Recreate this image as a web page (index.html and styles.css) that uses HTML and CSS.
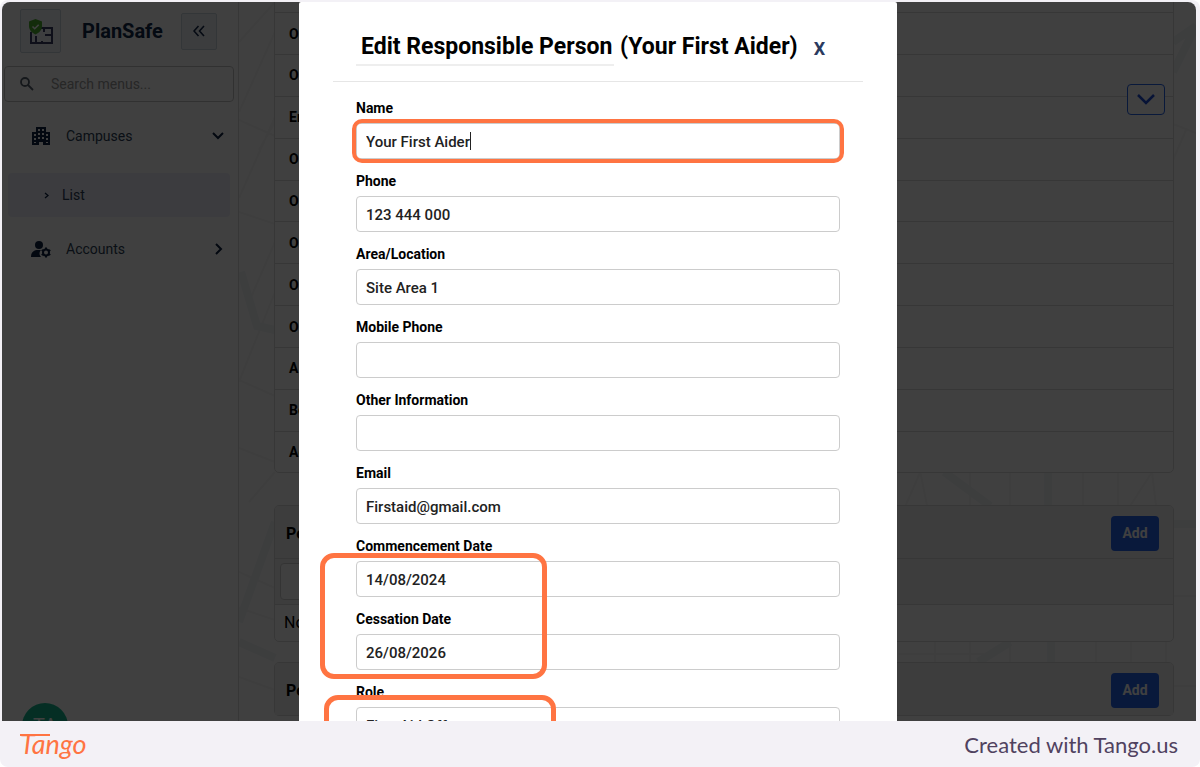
FILE: index.html
```html
<!DOCTYPE html>
<html lang="en">
  <head>
    <meta charset="utf-8">
    <title>PlanSafe</title>
    <link rel="stylesheet" href="styles.css">
  </head>
  <body>
    <div class="page">
      <div class="frame">
        <div class="app">
          <!-- Sidebar -->
          <aside class="sidebar">
            <div class="brand">
              <div class="logo">
                <svg width="26" height="28" viewBox="0 0 26 28" fill="none">
                  <path d="M3 15v11h21V11H13M8 26v-6h-1M16 11v4M24 18h-7M14 26v-2" stroke="#3b3f66" stroke-width="2"/>
                  <path d="M7.500 2l6.500 2.500v4.500c0 4-3 7-6.500 8.500c-3.500-1.500-6.500-4.500-6.500-8.500V4.500z" fill="#4caf2f"/>
                  <path d="M4.500 9.500l2.200 2.200l4-4" stroke="#fff" stroke-width="1.600"/>
                </svg>
              </div>
              <span class="brand-name">PlanSafe</span>
              <button class="collapse" aria-label="Collapse menu">
                <svg width="12" height="12" viewBox="0 0 12 12" fill="none" stroke="#14294a" stroke-width="1.6"><path d="M5.500 1L1 6l4.500 5M11 1L6.500 6l4.500 5"/></svg>
              </button>
            </div>
            <div class="search">
              <svg width="14" height="14" viewBox="0 0 14 14" fill="none" stroke="#55606e" stroke-width="1.8"><circle cx="5" cy="5" r="4"/><path d="M8 8l5 5"/></svg>
              <input type="text" aria-label="Search menus" placeholder="Search menus...">
            </div>
            <nav>
              <a class="menu-item" href="#campuses">
                <svg width="20" height="20" viewBox="0 0 20 20"><path fill="#0d2040" fill-rule="evenodd" d="M5 1h10v5h4v13h-7v-3H8v3H1V6h4zM7 3v2h2V3zM11 3v2h2V3zM7 7v2h2V7zM11 7v2h2V7zM3 8v2h2V8zM15 8v2h2V8zM3 12v2h2v-2zM7 11v2h2v-2zM11 11v2h2v-2zM15 12v2h2v-2zM3 16v1h2v-1zM15 16v1h2v-1z"/></svg>
                <span>Campuses</span>
                <svg class="arrow" width="12" height="12" viewBox="0 0 12 12" fill="none" stroke="#0d2040" stroke-width="2"><path d="M1 3l5 5l5-5"/></svg>
              </a>
              <a class="submenu-item" href="#list">
                <svg width="5" height="7" viewBox="0 0 5 7" fill="none" stroke="#0d2040" stroke-width="1.3"><path d="M1 1l3 2.500l-3 2.500"/></svg>
                <span>List</span>
              </a>
              <a class="menu-item" href="#accounts">
                <svg width="20" height="18" viewBox="0 0 20 18"><circle cx="8" cy="5" r="4" fill="#0d2040"/><path fill="#0d2040" d="M0 17c0-5 3-7 7-7h3c-2 2-2 5 0 7z"/><circle cx="15" cy="12.500" r="3" fill="none" stroke="#0d2040" stroke-width="2"/><path d="M15 7.500v2M15 15.500v2M10.700 10l1.700 1M17.600 14l1.700 1M10.700 15l1.700-1M17.600 11l1.700-1" stroke="#0d2040" stroke-width="2"/></svg>
                <span>Accounts</span>
                <svg class="arrow" width="12" height="12" viewBox="0 0 12 12" fill="none" stroke="#0d2040" stroke-width="2"><path d="M4 1l5 5l-5 5"/></svg>
              </a>
            </nav>
            <div class="avatar">TA</div>
          </aside>

          <!-- Campus details -->
          <main class="content">
            <svg class="map" viewBox="0 0 958 719" preserveAspectRatio="none" fill="none">
              <g stroke="#f6f6f6" stroke-width="2">
                <path d="M0 40L36 0M0 110L36 30M0 118L36 134M20 148L36 120M0 196L36 115M0 210L36 222M10 300L36 240M0 380L36 290M0 378L36 394M0 446L36 460M0 570L36 586M0 606L36 618M0 675L36 688M10 500L36 470"/>
                <path d="M660 520L682 470L692 520M732 470v34M772 470v34M845 470v34M880 470v34M892 504L914 470L918 504M697 640v20M732 640v20M772 640v20M858 640v20M893 640v20M928 640v20M660 652h86M935 122L958 131M935 158L948 128M935 594h23M935 684h23"/>
              </g>
              <g stroke="#f2f5f8" stroke-width="8">
                <path d="M2 270L18 324L36 328M706 470L752 504M810 470v34M740 660L772 640M813 640v20M935 40L958 24M935 70L956 28M935 522h23M0 620L36 520M0 640L36 656"/>
              </g>
            </svg>
            <section class="card details">
              <table>
                <tr><th>O</th></tr>
                <tr><th>O</th></tr>
                <tr><th>O</th></tr>
                <tr><th>En</th></tr>
                <tr><th>O</th></tr>
                <tr><th>O</th></tr>
                <tr><th>O</th></tr>
                <tr><th>O</th></tr>
                <tr><th>O</th></tr>
                <tr><th>A</th></tr>
                <tr><th>Be</th></tr>
                <tr><th>Ac</th></tr>
              </table>
            </section>
            <section class="card">
              <header class="card-header"><h2>Pe</h2><button class="add">Add</button></header>
              <div class="card-filter"><input type="text" aria-label="Filter"></div>
              <div class="card-empty">No</div>
            </section>
            <section class="card">
              <header class="card-header"><h2>Pe</h2><button class="add">Add</button></header>
            </section>
            <button class="toggle" aria-label="Show more">
              <svg width="18" height="11" viewBox="0 0 18 11" fill="none" stroke="#1d4ed8" stroke-width="2.500"><path d="M1 1l8 8l8-8"/></svg>
            </button>
          </main>
        </div>

        <!-- Edit dialog -->
        <div class="backdrop">
          <div class="modal" role="dialog" aria-labelledby="modal-title">
            <header class="modal-header">
              <h1 id="modal-title"><span class="underlined">Edit Responsible Person</span> (Your First Aider)</h1>
              <button class="close" aria-label="Close">X</button>
            </header>
            <form>
              <div class="field">
                <label for="name">Name</label>
                <div class="input-wrap">
                  <input type="text" id="name" value="Your First Aider">
                  <span class="caret"></span>
                  <span class="highlight highlight-name"></span>
                </div>
              </div>
              <div class="field">
                <label for="phone">Phone</label>
                <input type="text" id="phone" value="123 444 000">
              </div>
              <div class="field">
                <label for="area">Area/Location</label>
                <input type="text" id="area" value="Site Area 1">
              </div>
              <div class="field">
                <label for="mobile">Mobile Phone</label>
                <input type="text" id="mobile">
              </div>
              <div class="field">
                <label for="other">Other Information</label>
                <input type="text" id="other">
              </div>
              <div class="field">
                <label for="email">Email</label>
                <input type="text" id="email" value="Firstaid@gmail.com">
              </div>
              <div class="dates">
                <div class="field">
                  <label for="commencement">Commencement Date</label>
                  <input type="text" id="commencement" value="14/08/2024">
                </div>
                <div class="field">
                  <label for="cessation">Cessation Date</label>
                  <input type="text" id="cessation" value="26/08/2026">
                </div>
                <span class="highlight highlight-dates"></span>
              </div>
              <div class="field">
                <label for="role">Role</label>
                <div class="input-wrap">
                  <input type="text" id="role" value="First Aid Off">
                  <span class="highlight highlight-role"></span>
                </div>
              </div>
            </form>
          </div>
        </div>
      </div>

      <footer class="footer">
        <span class="tango">Tango</span>
        <span class="credit">Created with Tango.us</span>
      </footer>
    </div>
  </body>
</html>
```

FILE: styles.css
```css
* {
  box-sizing: border-box;
}

body {
  margin: 0;
  background: #fff;
  font-family: Roboto, Arial, sans-serif;
  font-size: 14px;
}

button,
input {
  font-family: inherit;
}

.page {
  height: 100vh;
  display: flex;
  flex-direction: column;
  background: #f3f1f6;
  border-radius: 8px;
  overflow: hidden;
}

.frame {
  position: relative;
  flex: 1;
  min-height: 0;
  margin: 2px 4px 0 2px;
  border-radius: 8px 8px 0 0;
  overflow: hidden;
}

.app {
  display: flex;
  height: 100%;
  background: #fff;
}

/* Sidebar */
.sidebar {
  position: relative;
  width: 237px;
  flex-shrink: 0;
  border-right: 1px solid #dcdcdc;
}

.brand {
  display: flex;
  align-items: center;
  height: 58px;
  padding: 0 21px 0 18px;
}

.logo {
  display: flex;
  align-items: center;
  justify-content: center;
  width: 41px;
  height: 44px;
  border: 1px solid #ccd6e0;
  border-radius: 2px;
  background: #f1f5fb;
}

.brand-name {
  flex: 1;
  margin-left: 21px;
  font-size: 20px;
  font-weight: 700;
  color: #10284a;
}

.collapse {
  display: flex;
  align-items: center;
  justify-content: center;
  width: 36px;
  height: 37px;
  border: 1px solid #ccd6e0;
  border-radius: 2px;
  background: #edf2f8;
}

.search {
  display: flex;
  align-items: center;
  height: 36px;
  margin: 6px 4px 0 2px;
  padding: 0 15px;
  border: 1px solid #c4c4c4;
  border-radius: 4px;
}

.search input {
  flex: 1;
  min-width: 0;
  margin-left: 17px;
  padding: 0;
  border: none;
  background: none;
  font-size: 14px;
}

.search input::placeholder {
  color: #9a9a9a;
}

.menu-item,
.submenu-item {
  display: flex;
  align-items: center;
  color: #2d3f57;
  text-decoration: none;
}

.menu-item {
  height: 64px;
  padding: 0 14px 0 29px;
}

.menu-item span {
  margin-left: 15px;
}

.arrow {
  margin-left: auto;
}

.menu-item:first-child {
  height: 67px;
  margin-bottom: 4px;
}

.submenu-item {
  height: 44px;
  margin: 0 8px 0 6px;
  padding-left: 36px;
  border-radius: 4px;
  background: #edf0fc;
}

.submenu-item span {
  margin-left: 13px;
}

.avatar {
  position: absolute;
  left: 20px;
  bottom: -28px;
  width: 46px;
  height: 46px;
  border-radius: 50%;
  background: #17b890;
  color: #fff;
  font-size: 20px;
  line-height: 46px;
  text-align: center;
}

/* Campus details */
.content {
  position: relative;
  flex: 1;
  min-width: 0;
  padding: 0 22px 0 35px;
  overflow: hidden;
}

.map {
  position: absolute;
  top: 0;
  left: 0;
  width: 100%;
  height: 100%;
}

.card {
  position: relative;
  margin-bottom: 20px;
  border: 1px solid #dcdcdc;
  border-radius: 5px;
  background: #fff;
}

.details {
  margin: -31px 0 32px;
}

.details table {
  width: 100%;
  height: 500px;
  border-collapse: collapse;
}

.details th {
  padding: 0 14px;
  border-bottom: 1px solid #dcdcdc;
  text-align: left;
}

.details tr:last-child th {
  border-bottom: none;
}

.card-header {
  display: flex;
  align-items: center;
  justify-content: space-between;
  height: 52px;
  padding: 2px 14px 0 11px;
  border-radius: 4px 4px 0 0;
  background: #f3f3f3;
}

.card-header h2 {
  margin: 0;
  font-size: 16px;
}

.add {
  width: 48px;
  height: 35px;
  padding: 0;
  border: none;
  border-radius: 4px;
  background: #2563eb;
  color: #fff;
  font-size: 14px;
  font-weight: 700;
}

.card-filter {
  height: 47px;
  padding: 4px 5px;
  border: solid #dcdcdc;
  border-width: 1px 0;
  background: #f3f3f3;
}

.card-filter input {
  width: 240px;
  height: 37px;
  border: 1px solid #d0d0d0;
  border-radius: 4px;
}

.card-empty {
  padding: 0 9px;
  font-size: 16px;
  line-height: 36px;
}

.toggle {
  position: absolute;
  top: 82px;
  right: 31px;
  display: flex;
  align-items: center;
  justify-content: center;
  width: 38px;
  height: 31px;
  border: 1px solid #2563eb;
  border-radius: 4px;
  background: #fff;
}

/* Edit dialog */
.backdrop {
  position: absolute;
  top: 0;
  right: 0;
  bottom: 0;
  left: 0;
  display: flex;
  justify-content: center;
  padding-right: 2px;
  background: rgba(0, 0, 0, 0.75);
}

.modal {
  width: 598px;
  height: max-content;
  padding: 0 34px;
  border-radius: 2px;
  background: #fff;
}

.modal-header {
  display: flex;
  align-items: center;
  height: 80px;
  padding: 13px 23px 0;
  border-bottom: 1px solid #e6e6e6;
}

.modal-header h1 {
  margin: 0;
  font-size: 23px;
  font-weight: 700;
  line-height: 34px;
  white-space: nowrap;
}

.underlined {
  display: inline-block;
  padding: 0 2px 0 5px;
  border-bottom: 2px solid #eee;
}

.close {
  margin-left: 16px;
  padding: 0;
  border: none;
  background: none;
  color: #2b3a5f;
  font-size: 18px;
  font-weight: 700;
}

form {
  padding: 15px 23px;
}

.field {
  height: 73px;
}

.field label {
  display: block;
  height: 26px;
  font-weight: 700;
  line-height: 22px;
}

.field input {
  display: block;
  width: 100%;
  height: 36px;
  padding: 1px 9px 0;
  border: 1px solid #ccc;
  border-radius: 4px;
  color: #222;
  font-size: 15px;
  font-weight: 500;
}

.input-wrap,
.dates {
  position: relative;
}

.caret {
  position: absolute;
  top: 9px;
  left: 114px;
  width: 1px;
  height: 18px;
  background: #222;
}

.highlight {
  position: absolute;
  border: 5px solid #ff7442;
  border-radius: 14px;
  pointer-events: none;
}

.highlight-name {
  top: -4px;
  right: -4px;
  bottom: -4px;
  left: -4px;
  border-width: 4px;
  border-radius: 10px;
}

.highlight-dates {
  top: 18px;
  left: -36px;
  width: 227px;
  height: 126px;
}

.highlight-role {
  top: -12px;
  left: -32px;
  width: 232px;
  height: 64px;
}

/* Footer */
.footer {
  display: flex;
  align-items: center;
  justify-content: space-between;
  height: 46px;
  padding: 0 22px 0 20px;
  font-family: Lato, sans-serif;
}

.tango {
  position: relative;
  color: #ff7442;
  font-size: 27px;
  font-style: italic;
  line-height: 28px;
}

.tango::before {
  content: "";
  position: absolute;
  top: 4px;
  left: 0;
  width: 30px;
  height: 2px;
  background: #ff7442;
}

.credit {
  color: #50425f;
  font-size: 22px;
}
```
